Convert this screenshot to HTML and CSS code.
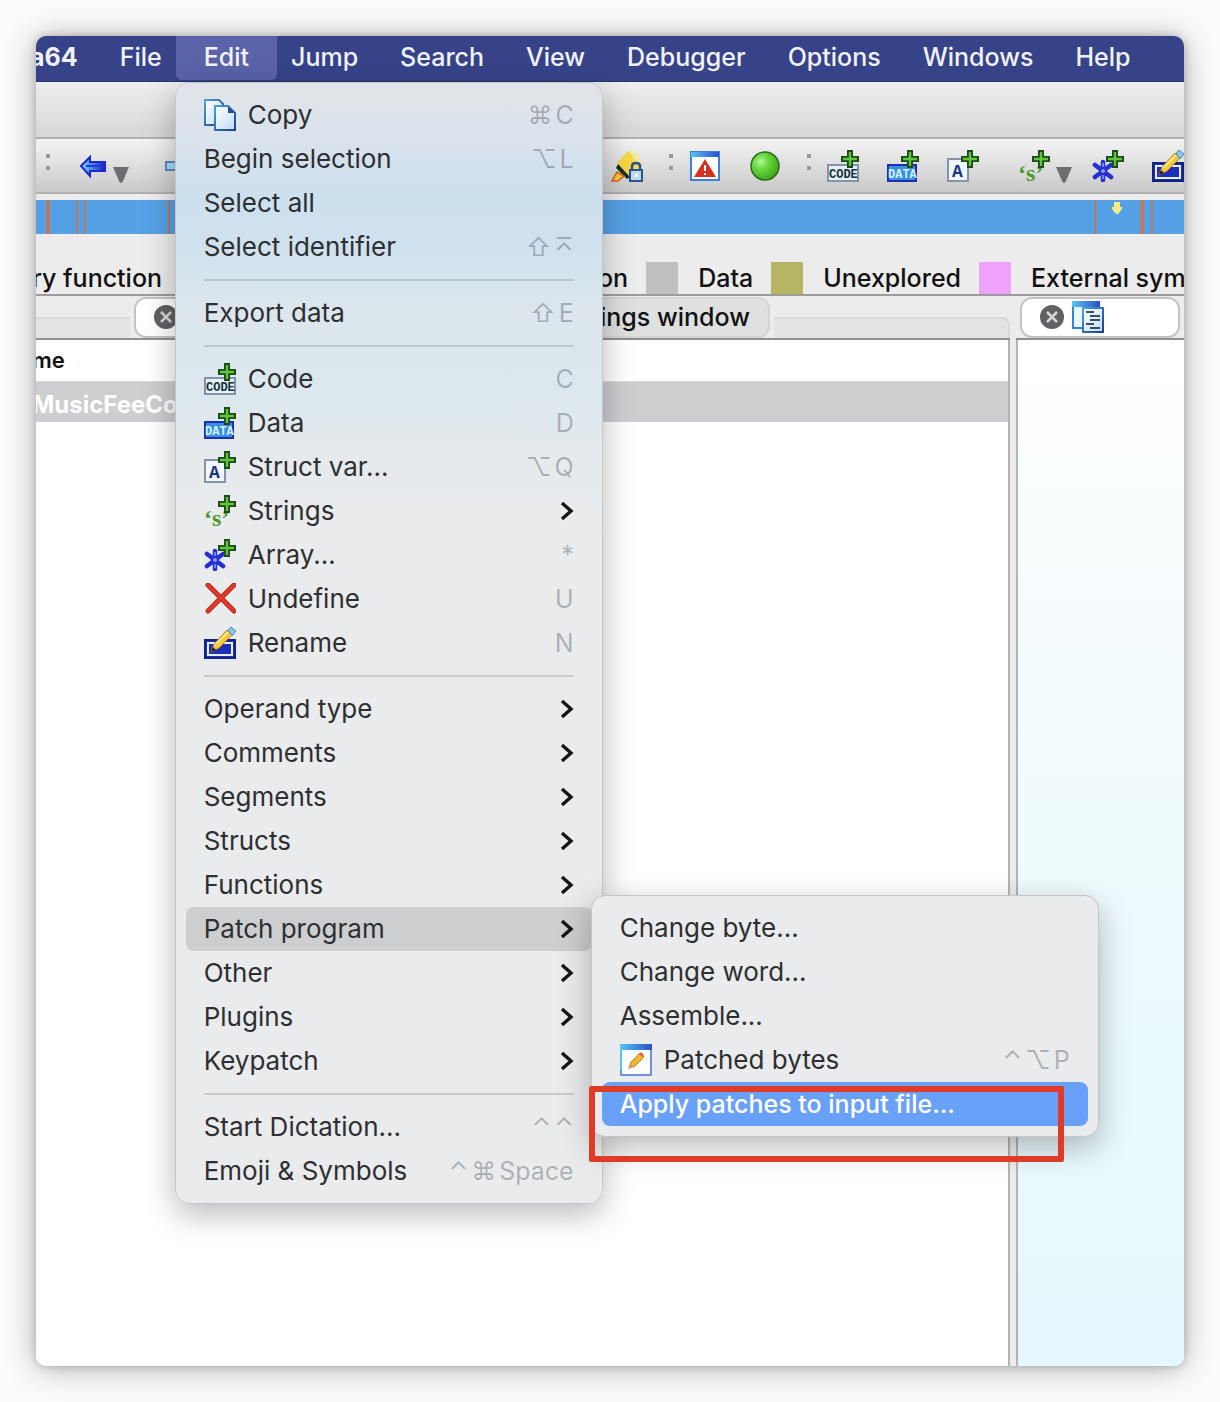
FILE: index.html
```html
<!DOCTYPE html>
<html lang="en">
<head>
<meta charset="utf-8">
<meta name="viewport" content="width=device-width, initial-scale=1">
<title>ida64</title>
<link rel="stylesheet" href="styles.css">
</head>
<body>
<svg class="sprite" aria-hidden="true">
  <defs>
    <linearGradient id="g-page" x1="0" y1="0" x2="1" y2="1"><stop offset="0" stop-color="#fff"/><stop offset="1" stop-color="#c2dcfb"/></linearGradient>
    <linearGradient id="g-edge" x1="0" y1="0" x2="1" y2="1"><stop offset="0" stop-color="#4aa0dd"/><stop offset="1" stop-color="#1f3f86"/></linearGradient>
    <linearGradient id="g-bar" x1="0" y1="0" x2="1" y2="0"><stop offset="0" stop-color="#56c4f5"/><stop offset="1" stop-color="#2a50c8"/></linearGradient>
    <linearGradient id="g-arrow" x1="0" y1="0" x2="1" y2="0"><stop offset="0" stop-color="#7fe2ff"/><stop offset="1" stop-color="#1620b8"/></linearGradient>
    <radialGradient id="g-ball" cx=".35" cy=".35" r=".7"><stop offset="0" stop-color="#b4f59a"/><stop offset=".4" stop-color="#68d83c"/><stop offset="1" stop-color="#3da51e"/></radialGradient>
  </defs>
  <symbol id="plus" viewBox="0 0 32 32">
    <path d="M23 0v18M14 9h18" stroke="#1c4a18" stroke-width="6"/>
    <path d="M23 2v14M16 9h14" stroke="#5fc63c" stroke-width="2.4"/>
  </symbol>
  <symbol id="copy" viewBox="0 0 32 32">
    <path d="M1 1h14l4 4v21H1z" fill="url(#g-page)" stroke="url(#g-edge)" stroke-width="2"/>
    <path d="M11 7h13l7 7v17H11z" fill="url(#g-page)" stroke="url(#g-edge)" stroke-width="2"/>
    <path d="M24 7v7h7z" fill="#24508f"/>
  </symbol>
  <symbol id="code" viewBox="0 0 32 32">
    <path d="M1 15h30v16H1z" fill="#e6f0fa" stroke="#8494a4" stroke-width="2"/>
  </symbol>
  <symbol id="data" viewBox="0 0 32 32">
    <path d="M1 15h28v16H1z" fill="#3a8fe0" stroke="#1a2fb4" stroke-width="2"/>
  </symbol>
  <symbol id="struct" viewBox="0 0 32 32">
    <path d="M1 9h20v22H1z" fill="#eef6ff" stroke="#8494a8" stroke-width="2"/>
  </symbol>
  <symbol id="array" viewBox="0 0 32 32">
    <path d="M11 12v18M3 15l16 12M19 15L3 27" stroke="#2430d4" stroke-width="4.6" stroke-linecap="round"/>
    <path d="M11 13v4M11 25v4" stroke="#8a9cff" stroke-width="1.6"/>
    <circle cx="11" cy="21" r="2" fill="#8a9cff"/>
  </symbol>
  <symbol id="undefine" viewBox="0 0 32 32">
    <path d="M4 2l26 26M30 2L4 28" stroke="#b8231a" stroke-width="5" stroke-linecap="round"/>
    <path d="M4 2l26 26M30 2L4 28" stroke="#e23b2c" stroke-width="3" stroke-linecap="round"/>
  </symbol>
  <symbol id="rename" viewBox="0 0 32 32">
    <path d="M1 13h30v18H1z" fill="#1c2fb8" stroke="#122480" stroke-width="2"/>
    <path d="M4 16h24v12H4z" fill="none" stroke="#e8f0ff" stroke-width="2"/>
    <path d="M7 25l3-8L23 3l5 5-13 13z" fill="#f6c93c" stroke="#c8801c" stroke-width="1"/>
    <path d="M11 18L24 5" stroke="#fff0a0" stroke-width="1.6"/>
    <path d="M7 25l2-5 3 3z" fill="#222"/>
    <path d="M24 3l3-3 5 4-4 5z" fill="#8cc8ea" stroke="#4c88b8"/>
  </symbol>
  <symbol id="patched" viewBox="0 0 32 32">
    <path d="M1 1h30v30H1z" fill="#fff" stroke="#6f90dc" stroke-width="2"/>
    <path d="M0 0h32v6H0z" fill="url(#g-bar)"/>
    <path d="M1 6v20" stroke="#56c4f5" stroke-width="2"/>
    <path d="M9 24l2-6L20 9l4 4-9 9z" fill="#f0b62c" stroke="#b9832c"/>
    <path d="M19 10l2-2 3 3-1 2z" fill="#e0604c"/>
    <path d="M8 25l2-5 3 3z" fill="#e48a7c"/>
  </symbol>
  <symbol id="arrow-left" viewBox="0 0 28 24">
    <path d="M2 12L11 3v5h15v9H11v5z" fill="url(#g-arrow)" stroke="#1c28d0" stroke-width="2"/>
    <path d="M7 12h16" stroke="#2038e8" stroke-width="2"/>
  </symbol>
  <symbol id="highlight" viewBox="0 0 32 32">
    <path d="M6 13L17 1l10 3 4 10-13 12z" fill="#f6d848"/>
    <path d="M18 1l9 3 4 9-4 2z" fill="#f3e7a8"/>
    <path d="M7 14l12 13-3 2L5 18z" fill="#16301c"/>
    <path d="M6 22l7 4-6 5H1z" fill="#f7cf30" stroke="#e2582c" stroke-width="1.5"/>
    <path d="M21 20v-4q0-3 4-3t4 3v4" fill="none" stroke="#2c5490" stroke-width="2.5"/>
    <path d="M19 20h12v11H19z" fill="#bcdcf6" stroke="#2c5490" stroke-width="2"/>
    <path d="M24 24h3v3h-3z" fill="#fff"/>
  </symbol>
  <symbol id="warning" viewBox="0 0 32 32">
    <path d="M2 2h28v28H2z" fill="#fff" stroke="#3f7fd8" stroke-width="2"/>
    <path d="M2 2h28v5H2z" fill="url(#g-bar)"/>
    <path d="M16 9l11 18H5z" fill="#d8301e"/>
    <path d="M16 15v6M16 23v2" stroke="#fff" stroke-width="2"/>
  </symbol>
  <symbol id="ball" viewBox="0 0 32 32"><circle cx="16" cy="16" r="14" fill="url(#g-ball)" stroke="#2c6c1c" stroke-width="1.5"/></symbol>
  <symbol id="view" viewBox="0 0 32 32">
    <path d="M1 1h26v26H1z" fill="#e8f6ff" stroke="#2f86d8" stroke-width="2"/>
    <path d="M0 0h28v6H0z" fill="url(#g-bar)"/>
    <path d="M11 7h20v24H11z" fill="url(#g-page)" stroke="url(#g-edge)" stroke-width="2"/>
    <path d="M14 11h8M18 15h10M18 19h10M14 23h8M18 27h10" stroke="#35506c" stroke-width="2"/>
  </symbol>
  <symbol id="close" viewBox="0 0 24 24"><circle cx="12" cy="12" r="12" fill="#606163"/><path d="M7 7l10 10M17 7L7 17" stroke="#d4d5d6" stroke-width="2.5"/></symbol>
  <symbol id="chevron" viewBox="0 0 14 20"><path d="M2 2l9 8-9 8" fill="none" stroke="#161616" stroke-width="3.4"/></symbol>
  <symbol id="caret" viewBox="0 0 16 16"><path d="M0 0h16L10 14q-2 4-4 0z" fill="#6c6d6f"/></symbol>
</svg>

<main class="window">
  <nav class="menubar" aria-label="Main menu">
    <button class="app" type="button">a64</button>
    <button type="button">File</button>
    <div class="opened">
      <button class="active" type="button" aria-expanded="true">Edit</button>
      <ul class="menu edit-menu">
        <li><button type="button"><svg class="icon"><use href="#copy"/></svg>Copy<kbd><i>⌘</i><i>C</i></kbd></button></li>
        <li><button type="button">Begin selection<kbd><i>⌥</i><i>L</i></kbd></button></li>
        <li><button type="button">Select all</button></li>
        <li><button type="button">Select identifier<kbd><i>⇧</i><i>⌅</i></kbd></button></li>
        <li class="rule" role="separator"></li>
        <li><button type="button">Export data<kbd><i>⇧</i><i>E</i></kbd></button></li>
        <li class="rule" role="separator"></li>
        <li><button type="button"><svg class="icon" viewBox="0 0 32 32"><use href="#code"/><text x="2" y="28" class="glyph code-ink">CODE</text><use href="#plus"/></svg>Code<kbd>C</kbd></button></li>
        <li><button type="button"><svg class="icon" viewBox="0 0 32 32"><use href="#data"/><text x="1" y="28" class="glyph data-ink">DATA</text><use href="#plus"/></svg>Data<kbd>D</kbd></button></li>
        <li><button type="button"><svg class="icon" viewBox="0 0 32 32"><use href="#struct"/><text x="5" y="27" class="glyph-a">A</text><use href="#plus"/></svg>Struct var...<kbd><i>⌥</i><i>Q</i></kbd></button></li>
        <li><button type="button"><svg class="icon" viewBox="0 0 32 32"><text x="0" y="31" class="glyph-s">‘s’</text><use href="#plus"/></svg>Strings<svg class="chevron"><use href="#chevron"/></svg></button></li>
        <li><button type="button"><svg class="icon" viewBox="0 0 32 32"><use href="#array"/><use href="#plus"/></svg>Array...<kbd>*</kbd></button></li>
        <li><button type="button"><svg class="icon"><use href="#undefine"/></svg>Undefine<kbd>U</kbd></button></li>
        <li><button type="button"><svg class="icon"><use href="#rename"/></svg>Rename<kbd>N</kbd></button></li>
        <li class="rule" role="separator"></li>
        <li><button type="button">Operand type<svg class="chevron"><use href="#chevron"/></svg></button></li>
        <li><button type="button">Comments<svg class="chevron"><use href="#chevron"/></svg></button></li>
        <li><button type="button">Segments<svg class="chevron"><use href="#chevron"/></svg></button></li>
        <li><button type="button">Structs<svg class="chevron"><use href="#chevron"/></svg></button></li>
        <li><button type="button">Functions<svg class="chevron"><use href="#chevron"/></svg></button></li>
        <li class="parent">
          <button class="open" type="button" aria-expanded="true">Patch program<svg class="chevron"><use href="#chevron"/></svg></button>
          <ul class="menu submenu">
            <li><button type="button">Change byte...</button></li>
            <li><button type="button">Change word...</button></li>
            <li><button type="button">Assemble...</button></li>
            <li><button type="button"><svg class="icon"><use href="#patched"/></svg>Patched bytes<kbd><i>⌃</i><i>⌥</i><i>P</i></kbd></button></li>
            <li class="parent"><button class="selected" type="button">Apply patches to input file...</button><span class="marker"></span></li>
          </ul>
        </li>
        <li><button type="button">Other<svg class="chevron"><use href="#chevron"/></svg></button></li>
        <li><button type="button">Plugins<svg class="chevron"><use href="#chevron"/></svg></button></li>
        <li><button type="button">Keypatch<svg class="chevron"><use href="#chevron"/></svg></button></li>
        <li class="rule" role="separator"></li>
        <li><button type="button">Start Dictation...<kbd><i>⌃</i><i>⌃</i></kbd></button></li>
        <li><button type="button">Emoji &amp; Symbols<kbd><i>⌃</i><i>⌘</i><i>Space</i></kbd></button></li>
      </ul>
    </div>
    <button type="button">Jump</button>
    <button type="button">Search</button>
    <button type="button">View</button>
    <button type="button">Debugger</button>
    <button type="button">Options</button>
    <button type="button">Windows</button>
    <button type="button">Help</button>
  </nav>

  <div class="titlebar"></div>

  <div class="toolbar">
    <div class="tools">
      <span class="grip"></span>
      <button type="button" aria-label="Back"><svg class="arrow"><use href="#arrow-left"/></svg></button>
      <button type="button" aria-label="Back history"><svg class="caret"><use href="#caret"/></svg></button>
      <button class="forward" type="button" aria-label="Forward"></button>
    </div>
    <div class="tools tools-end">
      <button type="button" aria-label="Lock highlight"><svg class="icon"><use href="#highlight"/></svg></button>
      <span class="grip"></span>
      <button type="button" aria-label="Problems"><svg class="icon"><use href="#warning"/></svg></button>
      <button type="button" aria-label="Run"><svg class="icon"><use href="#ball"/></svg></button>
      <span class="grip"></span>
      <button type="button" aria-label="Make code"><svg class="icon" viewBox="0 0 32 32"><use href="#code"/><text x="2" y="28" class="glyph code-ink">CODE</text><use href="#plus"/></svg></button>
      <button type="button" aria-label="Make data"><svg class="icon" viewBox="0 0 32 32"><use href="#data"/><text x="1" y="28" class="glyph data-ink">DATA</text><use href="#plus"/></svg></button>
      <button type="button" aria-label="Make struct"><svg class="icon" viewBox="0 0 32 32"><use href="#struct"/><text x="5" y="27" class="glyph-a">A</text><use href="#plus"/></svg></button>
      <div class="split">
        <button type="button" aria-label="Make string"><svg class="icon" viewBox="0 0 32 32"><text x="0" y="31" class="glyph-s">‘s’</text><use href="#plus"/></svg></button>
        <button type="button" aria-label="String types"><svg class="caret"><use href="#caret"/></svg></button>
      </div>
      <button type="button" aria-label="Make array"><svg class="icon" viewBox="0 0 32 32"><use href="#array"/><use href="#plus"/></svg></button>
      <button type="button" aria-label="Edit name"><svg class="icon"><use href="#rename"/></svg></button>
    </div>
  </div>

  <div class="navigator"><svg class="cursor" viewBox="0 0 10 12"><path d="M2 0h6v5h2v2L6 12H4L0 7V5h2z" fill="#f6ee84"/></svg></div>

  <div class="legend">
    <span class="cut">ry function</span>
    <div class="keys">
      <span>on</span>
      <span class="key"><span class="swatch data"></span>Data</span>
      <span class="key"><span class="swatch unexplored"></span>Unexplored</span>
      <span class="key"><span class="swatch external"></span>External sym</span>
    </div>
  </div>

  <div class="docks">
    <section class="dock">
      <div class="tabs">
        <span class="band lead"></span>
        <button class="tab current wide" type="button" aria-label="Functions"><svg class="close"><use href="#close"/></svg></button>
        <button class="tab" type="button">ings window</button>
        <span class="band rest"></span>
      </div>
      <table class="list">
        <thead><tr><th>me</th></tr></thead>
        <tbody><tr><td>MusicFeeCo</td></tr></tbody>
      </table>
    </section>
    <section class="dock view">
      <div class="tabs">
        <button class="tab current" type="button" aria-label="View"><svg class="close"><use href="#close"/></svg><svg class="icon"><use href="#view"/></svg></button>
      </div>
      <div class="canvas"></div>
    </section>
  </div>
</main>
</body>
</html>
```
FILE: styles.css
```css
* { box-sizing: border-box; }

body {
  margin: 0;
  padding: 36px;
  min-height: 100vh;
  display: flex;
  background: #fbfbfb;
  color: #111;
  font: 500 25px/32px Inter, "Liberation Sans", sans-serif;
}

.sprite { position: absolute; width: 0; height: 0; }

button {
  margin: 0;
  padding: 0;
  border: 0;
  background: none;
  color: inherit;
  font: inherit;
  text-align: left;
  white-space: nowrap;
}

.icon { flex: none; display: block; width: 32px; height: 32px; overflow: visible; }
.glyph { font: 700 12px "Liberation Mono", monospace; }
.code-ink { fill: #123038; }
.data-ink { fill: #d4f2ff; }
.glyph-a { font: 700 18px "Liberation Mono", monospace; fill: #1c3478; }
.glyph-s { font: 700 24px "Liberation Serif", serif; fill: #4a9c2c; }

.window {
  flex: 1;
  min-width: 0;
  display: flex;
  flex-direction: column;
  overflow: hidden;
  border-radius: 10px;
  background: #ececec;
  box-shadow: 0 0 8px rgba(0, 0, 0, .2), 0 2px 32px rgba(0, 0, 0, .3);
}

/* Menu bar */
.menubar {
  position: relative;
  z-index: 2;
  display: flex;
  height: 46px;
  background: #364389;
  border-bottom: 1px solid #2a3570;
  color: #f1f2f8;
}
.menubar > button, .opened > button {
  height: 44px;
  padding: 0 21px 2px;
}
.menubar > .app { padding-left: 0; margin-left: -6px; font-weight: 700; }
.opened { position: relative; margin: 0 -7px; }
.opened > .active { padding: 0 28px 2px; background: #5a63a8; border-radius: 0 0 6px 6px; }

/* Menus */
.menu {
  position: absolute;
  margin: 0;
  padding: 10px;
  list-style: none;
  border: 1px solid #c3c5c9;
  border-radius: 14px;
  background: #eaebed;
  box-shadow: 0 10px 32px rgba(0, 0, 0, .28);
  color: #2d2f31;
  font-size: 26px;
  font-weight: 400;
}
.edit-menu {
  top: 46px;
  left: -1px;
  width: 428px;
  background: linear-gradient(#e1e4e8, #dbe3ec 50px, #cde0ee 110px, #cfe1ee 160px, #dce6ec 230px, #dce8ee 310px, #e6eaed 380px, #eaebed 450px);
}
.menu button {
  display: flex;
  align-items: center;
  gap: 12px;
  width: 100%;
  height: 44px;
  padding: 0 18px;
  border-radius: 8px;
}
.rule { height: 2px; margin: 10px 18px; background: rgba(70, 80, 90, .2); }
.chevron { width: 14px; height: 20px; margin-left: auto; }
kbd {
  display: flex;
  gap: 3px;
  margin-left: auto;
  font: inherit;
  font-size: 25px;
  color: rgba(40, 50, 60, .32);
}
kbd i { font-style: normal; }
.parent { position: relative; }
.menu .open { background: #cdced0; }
.submenu { top: -12px; left: 405px; width: 508px; }
.menu .selected { background: #69a1f8; color: #fff; font-size: 25px; font-weight: 500; }
.marker {
  position: absolute;
  top: 4px;
  left: -13px;
  width: 475px;
  height: 76px;
  border: 6px solid #e03b27;
  border-radius: 2px;
}

/* Toolbar */
.titlebar {
  height: 57px;
  background: linear-gradient(#eeeeee, #d6d6d6);
  border-bottom: 2px solid #b0b0b0;
}
.toolbar {
  display: flex;
  justify-content: space-between;
  height: 55px;
  background: linear-gradient(#f4f4f4, #c9c9c9);
  border-bottom: 2px solid #b0b0b0;
}
.tools { display: flex; align-items: center; padding-left: 10px; }
.tools-end { gap: 28px; }
.grip {
  width: 4px;
  height: 16px;
  margin-bottom: 8px;
  border: solid #9a9a9a;
  border-width: 4px 0;
}
.tools-end .grip { margin-left: -2px; margin-right: -12px; }
.tools .arrow { display: block; width: 28px; height: 24px; margin-left: 29px; }
.caret { display: block; width: 16px; height: 16px; margin: 18px 0 0 6px; }
.forward { width: 30px; height: 10px; margin-left: 36px; border: 2px solid #6880c0; background: #9cdcf8; }
.split { display: flex; align-items: center; margin: 0 -8px 0 11px; }

.navigator {
  height: 34px;
  margin-top: 6px;
  display: flex;
  justify-content: flex-end;
  padding: 2px 62px 0 0;
  background:
    linear-gradient(#b87a62, #b87a62) 10px 0 / 4px 100% no-repeat,
    linear-gradient(#b87a62, #b87a62) 40px 0 / 2px 100% no-repeat,
    linear-gradient(#b87a62, #b87a62) 48px 0 / 2px 100% no-repeat,
    linear-gradient(#b87a62, #b87a62) 132px 0 / 2px 100% no-repeat,
    linear-gradient(#b87a62, #b87a62) right 88px top 0 / 2px 100% no-repeat,
    linear-gradient(#b87a62, #b87a62) right 40px top 0 / 4px 100% no-repeat,
    linear-gradient(#b87a62, #b87a62) right 31px top 0 / 2px 100% no-repeat,
    #56a1e6;
}
.cursor { width: 10px; height: 12px; }

.legend {
  display: grid;
  grid-template-columns: 562px minmax(0, 1fr);
  padding-top: 28px;
  border-bottom: 2px solid #9c9c9c;
  white-space: nowrap;
}
.cut { margin-left: -4px; }
.keys { display: flex; gap: 18px; }
.key { display: flex; gap: 20px; }
.swatch { width: 32px; height: 32px; }
.data { background: #c0c0c0; }
.unexplored { background: #b5b565; }
.external { background: #eea2fb; }

/* Docked panes */
.docks { flex: 1; display: grid; grid-template-columns: minmax(0, 1fr) 168px; gap: 6px; }
.dock { display: flex; flex-direction: column; background: #fff; border-right: 2px solid #b4b4b4; }
.tabs {
  display: flex;
  height: 44px;
  padding-top: 1px;
  margin-right: -2px;
  background: #ececec;
  border-bottom: 2px solid #8f8f8f;
}
.band { height: 21px; align-self: flex-end; background: #e4e4e4; border-top: 2px solid #d8d8d8; }
.lead { width: 94px; }
.rest { flex: 1; margin-left: 4px; border-right: 2px solid #d8d8d8; border-radius: 0 8px 0 0; }
.tab {
  display: flex;
  align-items: center;
  gap: 8px;
  padding: 0 18px 2px;
  background: #dfe0e0;
  border: 2px solid #d4d4d4;
  border-radius: 12px;
}
.tab.current { background: #fff; border-color: #c4c4c4; }
.wide { width: 446px; margin-left: 4px; }
.close { flex: none; width: 24px; height: 24px; }
.list { width: 100%; border-collapse: collapse; }
.list th, .list td { height: 41px; padding: 0; text-align: left; text-indent: -4px; }
.list th { font-size: 22px; font-weight: 600; border-bottom: 1px solid #dcdcdc; }
.list td { padding-top: 6px; background: #cdced0; color: #fff; font-size: 24px; font-weight: 700; }
.view { border-right: 0; border-left: 2px solid #b4b4b4; }
.view .tabs { margin: 0 0 0 -2px; padding-left: 4px; padding-right: 4px; }
.view .tab { flex: 1; padding-left: 18px; }
.canvas { flex: 1; background: linear-gradient(#fff, #f5fcfe 30%, #eaf9fd 70%, #e6f8fd); }
```
